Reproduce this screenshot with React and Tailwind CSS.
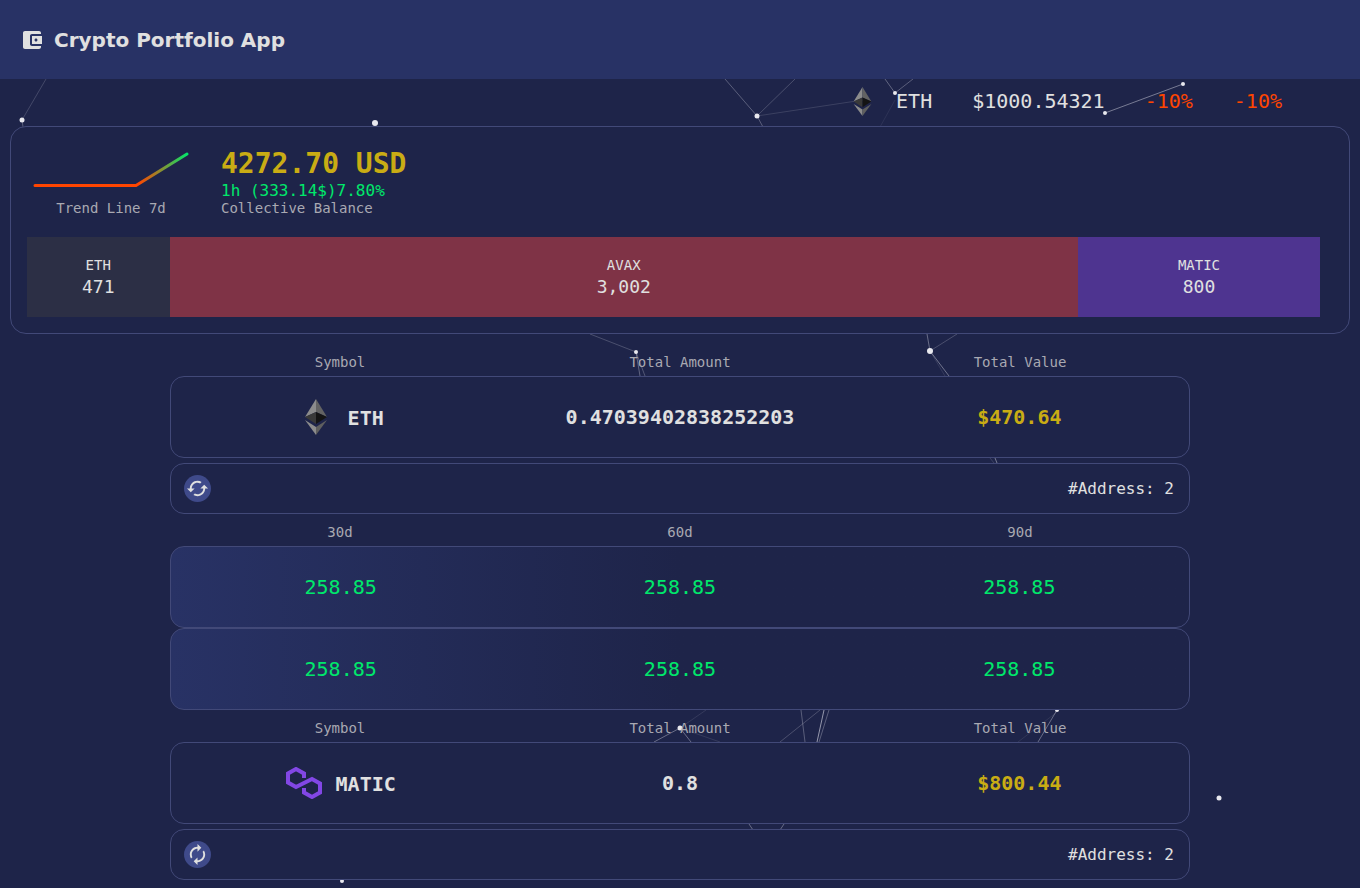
const mono = "font-['DejaVu_Sans_Mono',monospace]";

const holdings = [
  { name: "ETH", label: "471", value: 471, color: "bg-[#2c2f45]" },
  { name: "AVAX", label: "3,002", value: 3002, color: "bg-[#7f3346]" },
  { name: "MATIC", label: "800", value: 800, color: "bg-[#4e3490]" },
];

const dots = [
  [22, 120, 2.5], [375, 123, 3], [757, 116, 2.5], [895, 93, 2], [1183, 84, 2], [1105, 113, 2],
  [636, 352, 2], [930, 351, 3], [680, 728, 2.5], [1057, 710, 2], [1219, 798, 2.5], [342, 881, 2],
];

const lines = [
  [22, 120, 46, 79, 0.25], [22, 120, 23, 127, 0.4], [757, 116, 725, 79, 0.4], [757, 116, 795, 79, 0.3],
  [757, 116, 863, 100, 0.2], [757, 116, 763, 127, 0.4], [895, 93, 885, 79, 0.45], [895, 93, 913, 79, 0.4],
  [895, 100, 880, 127, 0.1], [1183, 84, 1105, 113, 0.6], [636, 352, 590, 334, 0.3], [636, 352, 640, 376, 0.45],
  [636, 352, 645, 376, 0.35], [930, 351, 927, 334, 0.5], [930, 351, 957, 334, 0.3], [930, 351, 949, 376, 0.55],
  [930, 351, 945, 376, 0.15], [995, 458, 997, 463, 0.6], [990, 458, 994, 463, 0.2], [680, 728, 654, 742, 0.5],
  [680, 728, 691, 742, 0.5], [680, 728, 706, 710, 0.15], [680, 728, 720, 742, 0.15], [801, 710, 805, 742, 0.4],
  [824, 710, 817, 742, 0.8], [829, 710, 819, 742, 0.4], [820, 710, 780, 742, 0.3], [1057, 710, 1038, 742, 0.5],
  [1057, 712, 1018, 742, 0.12], [749, 824, 753, 830, 0.5], [784, 824, 780, 830, 0.5],
];

function NetworkBackground() {
  return (
    <svg className="absolute inset-0" width="1360" height="888" viewBox="0 0 1360 888">
      {lines.map(([x1, y1, x2, y2, o], i) => (
        <line key={i} x1={x1} y1={y1} x2={x2} y2={y2} stroke="#e5e5ee" strokeOpacity={o * 0.75} strokeWidth="1" />
      ))}
      {dots.map(([cx, cy, r], i) => (
        <circle key={i} cx={cx} cy={cy} r={r} fill="#e8e8ee" />
      ))}
    </svg>
  );
}

function EthIcon({ className }) {
  return (
    <svg className={className} viewBox="0 0 22 36">
      <polygon points="11,0 0,18 11,13" fill="#8c8c8c" />
      <polygon points="11,0 22,18 11,13" fill="#636363" />
      <polygon points="0,18 11,13 11,25" fill="#393939" />
      <polygon points="22,18 11,13 11,25" fill="#141414" />
      <polygon points="0,21 11,36 11,28" fill="#8c8c8c" />
      <polygon points="22,21 11,36 11,28" fill="#5f5f5f" />
    </svg>
  );
}

function MaticIcon() {
  return (
    <svg width="36" height="32" viewBox="0 0 36 32" fill="none">
      <path
        d="M18 11V6.5L10 2 2 6.5v9L10 20l16-8 8 4.5v9L26 30l-8-4.5V21"
        stroke="#8247e5"
        strokeWidth="4"
      />
    </svg>
  );
}

function RoundIcon({ path }) {
  return (
    <div className="flex h-[27px] w-[27px] items-center justify-center rounded-full bg-[#3f4a8a]">
      <svg width="23" height="23" viewBox="0 0 24 24" fill="#e0e0e0">
        <path d={path} />
      </svg>
    </div>
  );
}

const cachedPath =
  "m19 8-4 4h3c0 3.31-2.69 6-6 6-1.01 0-1.97-.25-2.8-.7l-1.46 1.46C8.97 19.54 10.43 20 12 20c4.42 0 8-3.58 8-8h3zM6 12c0-3.31 2.69-6 6-6 1.01 0 1.97.25 2.8.7l1.46-1.46C15.03 4.46 13.57 4 12 4c-4.42 0-8 3.58-8 8H1l4 4 4-4z";
const autorenewPath =
  "M12 6v3l4-4-4-4v3c-4.42 0-8 3.58-8 8 0 1.57.46 3.03 1.24 4.26L6.7 14.8c-.45-.83-.7-1.79-.7-2.8 0-3.31 2.69-6 6-6zm6.76 1.74L17.3 9.2c.44.84.7 1.79.7 2.8 0 3.31-2.69 6-6 6v-3l-4 4 4 4v-3c4.42 0 8-3.58 8-8 0-1.57-.46-3.03-1.24-4.26z";

function Labels({ items, className = "" }) {
  return (
    <div className={`mb-1 grid h-5 grid-cols-3 text-center text-sm leading-5 text-[#a9a9b2] ${className}`}>
      {items.map((t) => (
        <span key={t}>{t}</span>
      ))}
    </div>
  );
}

function CoinRows({ icon, symbol, amount, total, refresh }) {
  return (
    <>
      <div className="grid h-[82px] grid-cols-3 items-center rounded-[14px] border border-[#424978] bg-[#1e2449] text-center text-xl font-bold text-[#e0e0e0]">
        <div className="flex items-center justify-center gap-3.5">
          {icon}
          <span className="mt-0.5">{symbol}</span>
        </div>
        <span>{amount}</span>
        <span className="text-[#c9ac14]">{total}</span>
      </div>
      <div className="mt-[5px] flex h-[51px] items-center justify-between rounded-[14px] border border-[#424978] bg-[#1e2449] pl-[13px] pr-[15px] text-base text-[#e0e0e0]">
        <RoundIcon path={refresh} />
        <span>#Address: 2</span>
      </div>
    </>
  );
}

function ChangeRow() {
  return (
    <div className="grid h-[82px] grid-cols-3 items-center rounded-[14px] border border-[#424978] bg-gradient-to-r from-[#283265] to-[#1e2449] to-50% text-center text-xl text-[#00e86b]">
      <span>258.85</span>
      <span>258.85</span>
      <span>258.85</span>
    </div>
  );
}

export default function App() {
  return (
    <div className={`relative h-[888px] overflow-hidden bg-[#1e2449] ${mono}`}>
      <NetworkBackground />

      <div className="relative">
        <header className="flex h-[79px] items-center gap-2.5 bg-[#283265] pl-5 font-['DejaVu_Sans',sans-serif] text-xl font-bold text-[#e0e0e0]">
          <svg width="24" height="24" viewBox="0 0 24 24" fill="#e0e0e0">
            <path d="M21 18v1c0 1.1-.89 2-2 2H5c-1.11 0-2-.9-2-2V5c0-1.1.89-2 2-2h14c1.1 0 2 .9 2 2v1h-9c-1.11 0-2 .9-2 2v8c0 1.1.89 2 2 2h9zm-9-2h10V8H12v8zm4-2.5c-.83 0-1.5-.67-1.5-1.5s.67-1.5 1.5-1.5 1.5.67 1.5 1.5-.67 1.5-1.5 1.5z" />
          </svg>
          Crypto Portfolio App
        </header>

        {/* Ticker */}
        <div className="flex h-[47px] items-center justify-end pb-[3px] pr-[78px] text-xl text-[#e0e0e0]">
          <EthIcon className="mr-6 h-[29px] w-[19px]" />
          <span className="mr-10">ETH</span>
          <span className="mr-10">$1000.54321</span>
          <span className="mr-[41px] text-[#ff4500]">-10%</span>
          <span className="text-[#ff4500]">-10%</span>
        </div>

        {/* Balance panel */}
        <section className="mx-2.5 rounded-2xl border border-[#424978] bg-[#1e2449] px-4 pb-4 pt-5">
          <div className="flex h-[70px] items-start">
            <div className="flex w-[168px] flex-col items-center">
              <svg width="168" height="44" viewBox="0 0 168 44" fill="none">
                <defs>
                  <linearGradient id="trend" gradientUnits="userSpaceOnUse" x1="6" y1="0" x2="161" y2="0">
                    <stop offset="0.68" stopColor="#ff4500" />
                    <stop offset="1" stopColor="#00e86b" />
                  </linearGradient>
                </defs>
                <path
                  d="M8 38.5H109L160 7"
                  stroke="url(#trend)"
                  strokeWidth="3"
                  strokeLinecap="round"
                  strokeLinejoin="round"
                />
              </svg>
              <span className="mt-[7px] text-sm leading-5 text-[#a9a9b2]">Trend Line 7d</span>
            </div>
            <div className="ml-[26px] flex flex-col">
              <span className="text-[28px] font-bold leading-[34px] text-[#c9ac14]">4272.70 USD</span>
              <span className="text-base leading-[19px] text-[#00e86b]">1h (333.14$)7.80%</span>
              <span className="text-sm leading-4 text-[#a9a9b2]">Collective Balance</span>
            </div>
          </div>

          <div className="mt-5 flex h-20 w-[1293px]">
            {holdings.map((h) => (
              <div
                key={h.name}
                className={`flex basis-0 flex-col items-center justify-center text-[#e0e0e0] ${h.color}`}
                style={{ flexGrow: h.value }}
              >
                <span className="text-sm leading-5">{h.name}</span>
                <span className="text-lg leading-6">{h.label}</span>
              </div>
            ))}
          </div>
        </section>

        {/* Table */}
        <main className="mx-auto w-[1020px] pt-[18px]">
          <Labels items={["Symbol", "Total Amount", "Total Value"]} />
          <CoinRows
            icon={
              <div className="flex w-9 justify-center">
                <EthIcon className="h-9 w-[22px]" />
              </div>
            }
            symbol="ETH"
            amount="0.47039402838252203"
            total="$470.64"
            refresh={cachedPath}
          />

          <Labels items={["30d", "60d", "90d"]} className="mt-2" />
          <ChangeRow />
          <ChangeRow />

          <Labels items={["Symbol", "Total Amount", "Total Value"]} className="mt-2" />
          <CoinRows
            icon={<MaticIcon />}
            symbol="MATIC"
            amount="0.8"
            total="$800.44"
            refresh={autorenewPath}
          />
        </main>
      </div>
    </div>
  );
}
